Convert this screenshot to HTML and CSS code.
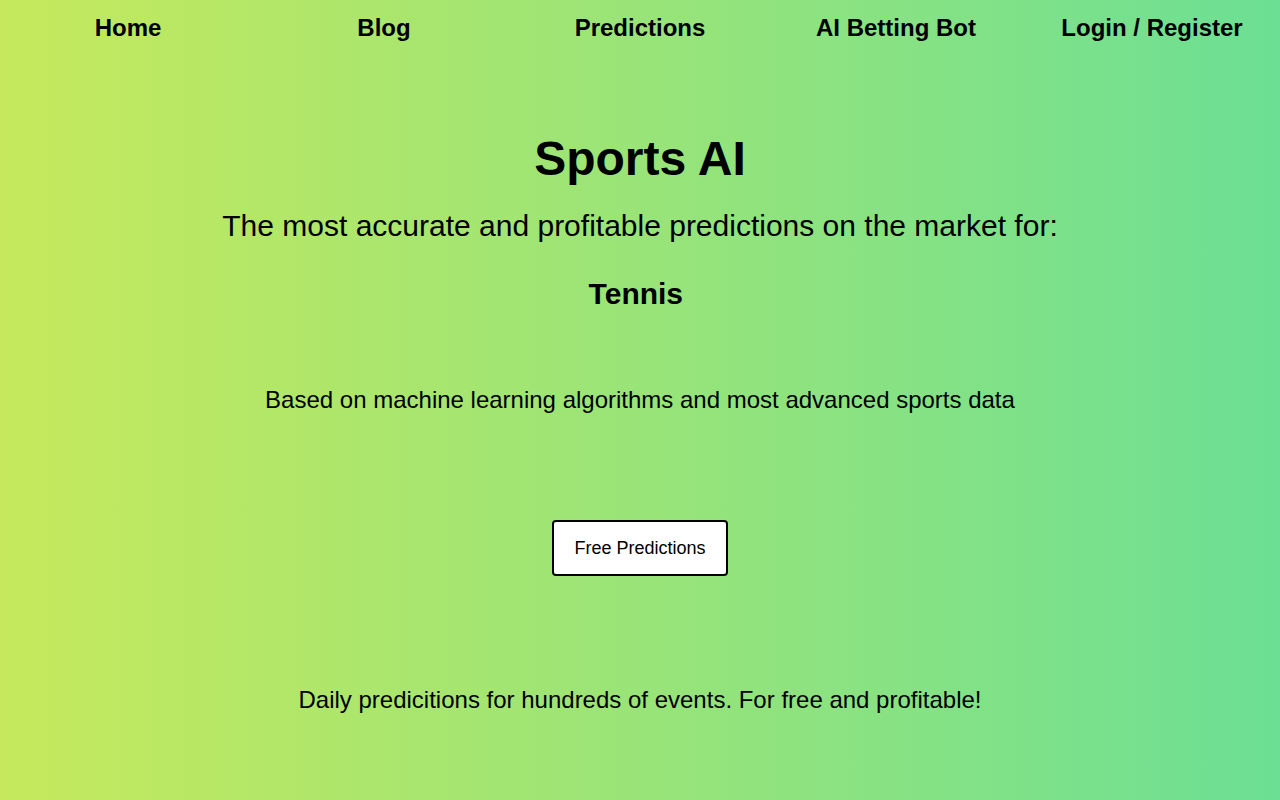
FILE: index.html
```html
<!DOCTYPE html>
<html lang="en">
<head>
<meta charset="utf-8">
<title>Sports AI</title>
<link rel="stylesheet" href="styles.css">
</head>
<body>
<nav class="nav">
  <a class="nav-item" href="#">Home</a>
  <a class="nav-item" href="#">Blog</a>
  <a class="nav-item" href="#">Predictions</a>
  <a class="nav-item" href="#">AI Betting Bot</a>
  <a class="nav-item" href="#">Login / Register</a>
</nav>
<main class="hero">
  <h1 class="title">Sports AI</h1>
  <p class="subtitle">The most accurate and profitable predictions on the market for:</p>
  <h2 class="sport">Tennis&nbsp;</h2>
  <p class="text based">Based on machine learning algorithms and most advanced sports data</p>
  <a class="btn" href="#">Free Predictions</a>
  <p class="text daily">Daily predicitions for hundreds of events. For free and profitable!</p>
</main>
</body>
</html>
```

FILE: styles.css
```css
html, body {
  margin: 0;
  padding: 0;
  height: 100%;
}
body {
  font-family: "Liberation Sans", Arial, sans-serif;
  color: #000;
  background: linear-gradient(to right, #c6e95c, #6cdf94);
  min-height: 800px;
}
.nav {
  display: grid;
  grid-template-columns: repeat(5, 1fr);
  height: 56px;
  align-items: center;
}
.nav-item {
  text-align: center;
  font-size: 24px;
  font-weight: bold;
  color: #000;
  text-decoration: none;
  line-height: 28px;
}
.hero {
  display: flex;
  flex-direction: column;
  align-items: center;
  text-align: center;
}
.title {
  margin: 75px 0 0;
  font-size: 48px;
  line-height: 56px;
  font-weight: bold;
}
.subtitle {
  margin: 21px 0 0;
  font-size: 30px;
  line-height: 36px;
}
.sport {
  margin: 32px 0 0;
  font-size: 30px;
  line-height: 36px;
  font-weight: bold;
}
.text {
  font-size: 24px;
  line-height: 28px;
  margin: 0;
}
.based {
  margin-top: 74px;
}
.btn {
  margin-top: 106px;
  box-sizing: border-box;
  width: 176px;
  height: 56px;
  display: flex;
  align-items: center;
  justify-content: center;
  background: #fff;
  border: 2px solid #000;
  border-radius: 4px;
  font-size: 18px;
  color: #000;
  text-decoration: none;
}
.daily {
  margin-top: 110px;
}
```
